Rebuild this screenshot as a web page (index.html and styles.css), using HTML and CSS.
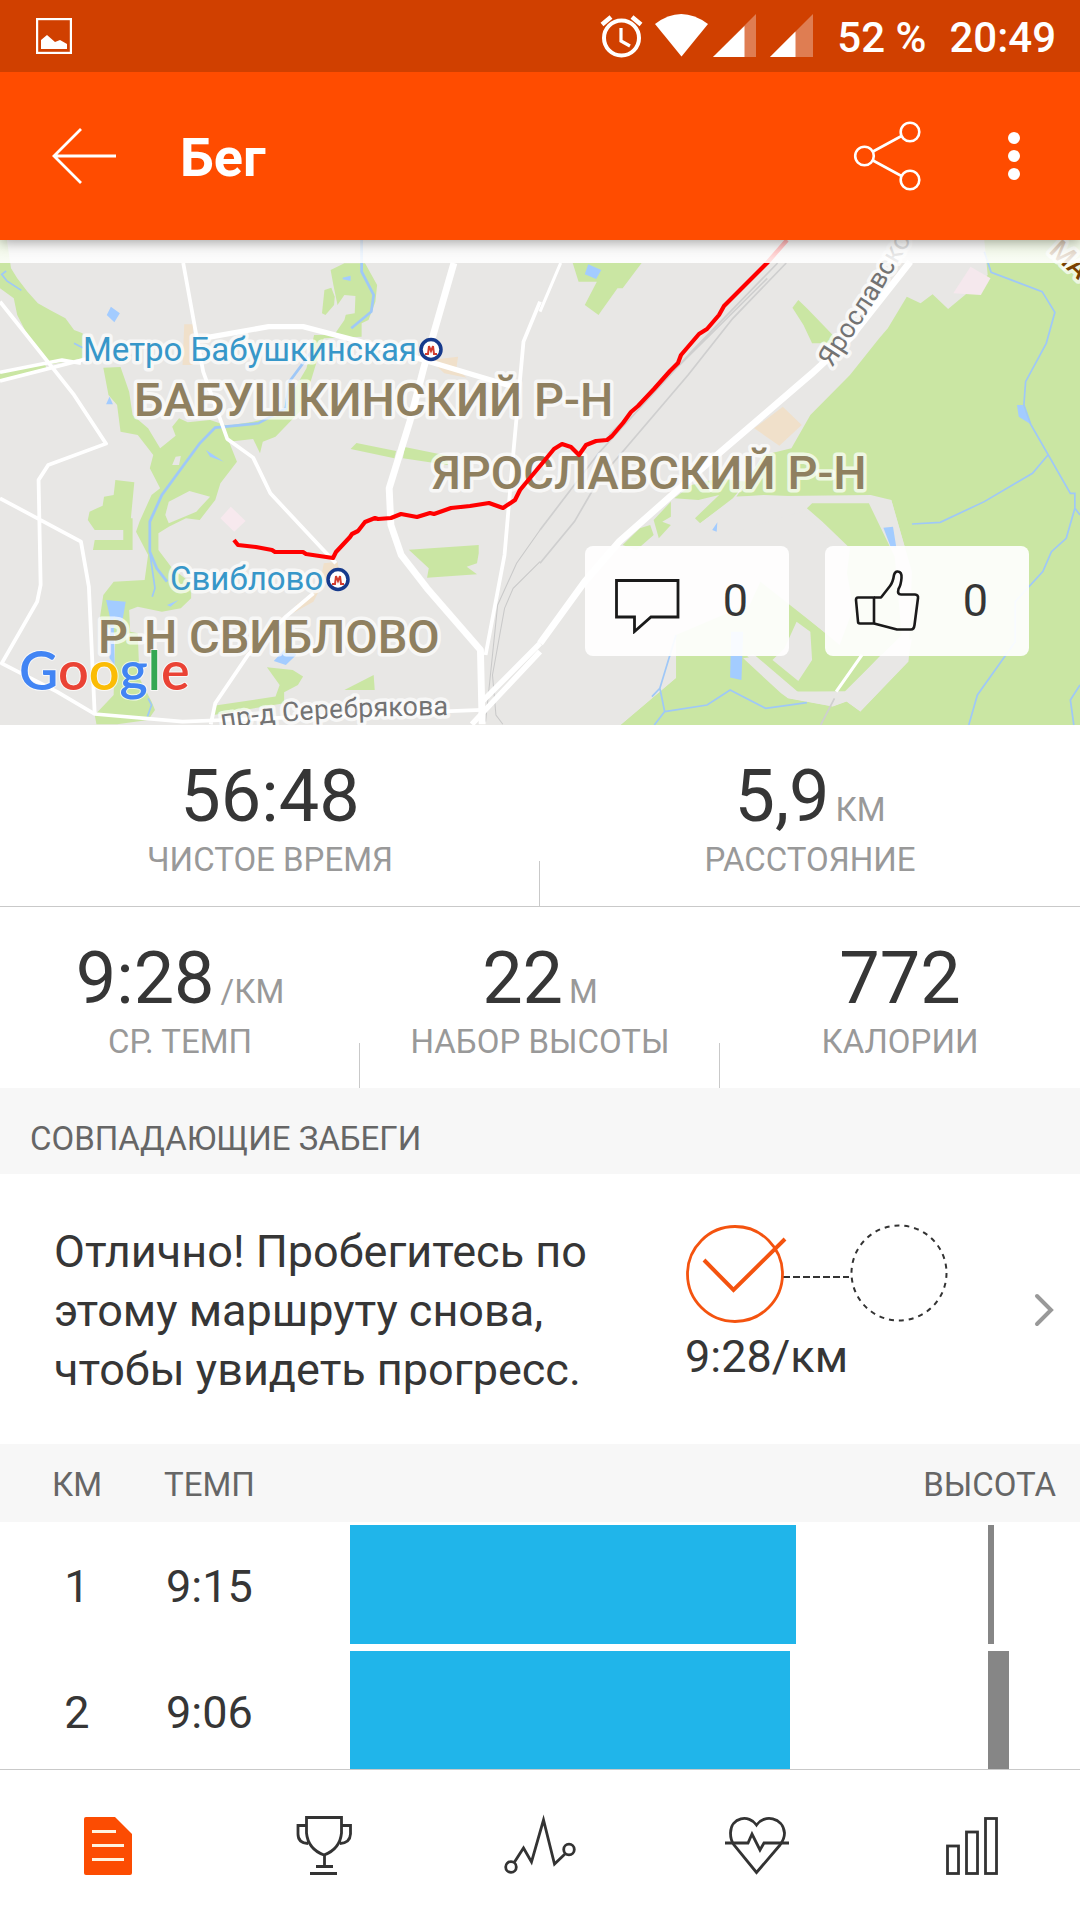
FILE: index.html
```html
<!DOCTYPE html>
<html lang="ru">
<head>
<meta charset="utf-8">
<meta name="viewport" content="width=device-width, initial-scale=1">
<title>Бег</title>
<link rel="stylesheet" href="styles.css">
</head>
<body>
<div class="app">
  <div class="status">
    <svg class="icon" width="36" height="36" viewBox="0 0 36 36" aria-hidden="true">
      <rect x="1" y="1" width="34" height="34" fill="none" stroke="#fff" stroke-width="2.4"/>
      <path d="M5 31V22l6-5 8 7 5-2 7 4v5z" fill="#fff"/>
    </svg>
    <div class="status-right">
      <svg class="icon" width="214" height="44" viewBox="601 14 214 44" fill="none" aria-hidden="true">
        <circle cx="622.500" cy="38" r="17.500" stroke="#fff" stroke-width="4"/>
        <path d="M622 28v13l9 5" stroke="#fff" stroke-width="3.200"/>
        <path d="M603 24.500l9-7.500M642 24.500l-9-7.500" stroke="#fff" stroke-width="4.500"/>
        <path d="M656 24Q682 4 709 24L682.500 56.500z" fill="#fff"/>
        <path d="M757 14v43h-43z" fill="#fff" opacity=".32"/>
        <path d="M745.500 26v31H714z" fill="#fff"/>
        <path d="M814 14v43h-43z" fill="#fff" opacity=".32"/>
        <path d="M796.500 31.500V57H771z" fill="#fff"/>
      </svg>
      <span class="reading">52 %</span>
      <span class="reading">20:49</span>
    </div>
  </div>

  <header class="toolbar">
    <button class="tool back" aria-label="Назад">
      <svg class="icon" width="66" height="60" viewBox="51 126 66 60" fill="none" stroke="#fff" stroke-width="2.800" aria-hidden="true">
        <path d="M116 156H54M81 129L54 156l27 27"/>
      </svg>
    </button>
    <h1 class="title">Бег</h1>
    <button class="tool" aria-label="Поделиться">
      <svg class="icon" width="68" height="72" viewBox="853 120 68 72" fill="none" stroke="#fff" stroke-width="2.600" aria-hidden="true">
        <circle cx="864.500" cy="156" r="9.300"/><circle cx="910" cy="132" r="9.300"/><circle cx="910" cy="180" r="9.300"/>
        <path d="M873 151.500L901.500 136M873 160.500L901.500 176"/>
      </svg>
    </button>
    <button class="tool more" aria-label="Ещё">
      <svg class="icon" width="12" height="48" viewBox="0 0 12 48" fill="#fff" aria-hidden="true">
        <circle cx="6" cy="6" r="6"/><circle cx="6" cy="24" r="6"/><circle cx="6" cy="42" r="6"/>
      </svg>
    </button>
  </header>

  <main class="content">
    <section class="map">
      <svg class="map-canvas" viewBox="0 240 1080 485" preserveAspectRatio="xMidYMid slice" role="img" aria-label="Карта маршрута">
        <rect x="0" y="240" width="1080" height="485" fill="#e8e7e5"/>
        <!-- western half -->
        <g transform="translate(0 235) scale(.3444 .3333)">
          <g fill="#cae6a3">
            <path d="M0 15H20L32 100 50 130 80 170 110 205 145 225 190 250 215 285 240 295V370L150 388 110 340 75 290 50 240 40 190 0 160z"/>
            <path d="M0 415L128 385 135 398 0 434z"/>
            <path d="M300 398L350 396 375 470 385 540 430 580 465 640 510 602 500 575 520 550 545 562 610 555 660 572 735 560 820 540 850 470 890 400 912 300 970 300 1000 255 1010 215 980 210 968 150 960 105 1000 85H1060L1095 150 1090 200 1070 255 1050 265V305L940 310 905 430 870 530 800 605 763 620 755 655 735 612 665 620 688 680 640 745 625 795 580 855 540 850 490 875 460 895V945L500 1000 555 1045V1090L525 1120 470 1130 400 1115 375 1125 378 1190 400 1195 405 1330 440 1400 450 1425 430 1455 340 1468H280L275 1440 330 1380 335 1200 290 1150 300 1080 330 1040 420 1035 430 960 395 890 405 860 440 780 465 760 435 700 445 660 400 600 350 590 340 510 315 480z"/>
            <path d="M942 165L962 158 972 185 970 210 945 240 935 235z"/>
            <path d="M335 735L390 742 380 850H385V945L270 945 275 915 358 915V885H275L255 855 260 830 298 812 302 785 330 780z"/>
            <path d="M1035 624L1150 648 1145 670 1018 642zM1175 636L1300 662V690L1170 670z"/>
            <path d="M1187 944L1390 930V955L1385 985 1355 995 1385 1018 1240 1028 1245 1000z"/>
            <path d="M775 1297L850 1305 880 1325 865 1350 825 1372V1405L620 1440 625 1412 800 1385 812 1350z"/>
            <path d="M1085 1320L1088 1365 1000 1365z"/>
          </g>
          <g fill="#e8e7e5">
            <path d="M980 210L1000 180 1032 183 1030 235 1000 240z"/>
            <path d="M490 800L550 768 610 785 570 830 490 865 480 840z"/>
            <path d="M510 665L525 663 520 690 500 690z"/>
          </g>
          <g fill="#f0e0ca">
            <path d="M535 268H560V390H530zM1250 375L1330 365 1325 400 1355 428 1290 415zM940 985L980 980 985 1010 930 1040zM860 1110L930 1060 910 1100 850 1135z"/>
          </g>
          <path d="M670 815L713 858 680 890 640 850z" fill="#f7e9ee"/>
          <g fill="#a3ccff">
            <path d="M322 215L348 235 332 262 310 240zM318 485L328 508 308 508zM598 645L650 680 610 665zM308 1095L365 1100 355 1160 330 1150 333 1290 318 1270 320 1150zM840 1228L860 1260 830 1290 795 1278zM485 1110L518 1095 495 1115zM995 128L1018 122V138L995 133z"/>
          </g>
          <g fill="none" stroke="#9fc8f7">
            <path d="M1050 15L1050 110 1085 180 1078 230 1020 280M905 350L840 440 830 520 750 565 625 578 580 625 470 780 435 860V950L455 1000 485 1040" stroke-width="8"/>
            <path d="M436 960L450 1060 442 1085M18 108L5 118 20 138 62 166M215 325L240 338M430 1390L440 1410 428 1445" stroke-width="5"/>
          </g>
          <g fill="none" stroke="#c9c9c9" stroke-width="3">
            <path d="M1568 885L1500 985 1445 1110 1410 1460M1568 980L1490 1060 1465 1120 1430 1320 1440 1440 1460 1468"/>
          </g>
          <g fill="none" stroke="#fff" stroke-linejoin="round">
            <path d="M532 84L570 300 590 410 660 612 735 668 785 775 975 985M0 200L150 395 215 480 308 626 140 690 112 735 118 1050 108 1100 5 1285 165 1370 275 1437 530 1460 1400 1425M0 790L235 920 258 1055 275 1437M0 412L180 375 235 385M0 438L250 372M910 1075L830 1145 720 1260 625 1405 612 1468M1568 200L1520 320 1490 660 1465 960 1410 1260" stroke-width="11"/>
            <path d="M600 308L780 275 880 275 1040 318 1240 378 1490 455M1568 1250L1370 1468M1568 1225L1400 1400" stroke-width="16"/>
            <path d="M1318 84L1230 400 1190 560 1130 760 1135 870 1165 960 1240 1060 1395 1245 1400 1468" stroke-width="20"/>
          </g>
        </g>
        <!-- eastern half -->
        <g transform="translate(540 235) scale(.3444 .3333)">
          <g fill="#cae6a3">
            <path d="M1290 15H1568V1470H235L395 1330 470 1260 600 1240 720 1110 880 1240 1050 1220 1060 940 1020 795 960 780 570 785 650 660 730 640 785 540 900 420 985 310 1010 280 1065 185 1105 205 1140 178 1185 222 1240 175 1300 120z"/>
            <path d="M95 84H295L240 160 225 160 180 225 170 240 130 210 165 140 112 140z"/>
            <path d="M750 195L775 220 850 300 855 325 790 325 765 270 733 218z"/>
            <path d="M390 790L440 750 520 730 600 740 560 790 465 865 450 850 520 780 460 795z"/>
            <path d="M240 930L290 880 320 870 330 900 280 945zM330 855L380 800 380 845 355 860 380 870 345 910z"/>
          </g>
          <path d="M570 785L650 780 1020 795 1080 1010 1070 1280 930 1430 890 1400 850 1415 720 1390 590 1280 380 1250 230 930 280 945 465 865z" fill="#e8e7e5"/>
          <path d="M395 1200L600 1110 720 1240 600 1262 640 1300 720 1390 850 1415 890 1400 930 1430 900 1470H235L395 1330z" fill="#cae6a3"/>
          <path d="M775 820L790 805 955 805 1030 965 1050 1200 885 1370 750 1372 600 1240 600 1130 640 1040 830 1195 870 1200 900 940 820 860z" fill="#cae6a3"/>
          <path d="M540 900L760 830 880 950 910 1120 870 1230 730 1110 600 1000 520 1000zM745 1160L785 1190 790 1275 750 1338 675 1275 710 1240zM1080 1210L1068 1280 930 1430 890 1400 850 1415 720 1390 700 1375 590 1270 625 1265 745 1370 890 1370 990 1260z" fill="#e8e7e5"/>
          <path d="M1250 95L1308 130 1280 180 1200 175z" fill="#f5e8ed"/>
          <path d="M705 515L760 570 695 632 622 580z" fill="#f0e0ca"/>
          <path d="M140 88L178 105 163 132 130 118zM515 862L513 890 500 885zM997 878L1025 875 1035 940 1018 935zM555 1190H590L585 1335 552 1328zM1385 510H1402L1425 568 1390 545z" fill="#a3ccff"/>
          <g fill="none" stroke="#9fc8f7" stroke-width="5">
            <path d="M1290 50L1310 112 1458 170 1495 232 1470 325 1410 440 1405 510 1425 568 1540 775H1553V820L1528 910 1485 950 1460 1010 1380 1100V1220L1270 1380 1245 1470M1475 660L1430 715 1290 800 1162 862 1080 867M1553 820L1568 840M1568 1350L1540 1395 1550 1470M395 1200L348 1360 362 1430 332 1470M325 1385L348 1360M362 1430L485 1410 552 1365 655 1420 775 1403"/>
          </g>
          <path d="M690 84L440 350 170 655 0 885M715 84L560 250 430 420 170 735 100 860 0 985M660 130L200 600M855 1390L815 1470" fill="none" stroke="#cfcfcf" stroke-width="5"/>
          <path d="M60 84L0 230M935 1260L860 1370" fill="none" stroke="#fff" stroke-width="9"/>
          <path d="M1075 80L900 310 790 415 520 655 230 920 130 1040 0 1225" fill="none" stroke="#fff" stroke-width="20"/>
        </g>
        <g class="label station">
          <text x="83" y="361">Метро Бабушкинская</text>
          <text x="170" y="590">Свиблово</text>
        </g>
        <g fill="#fff" stroke="#163a8c" stroke-width="3.500">
          <circle cx="431" cy="349.500" r="10"/><circle cx="338" cy="579.500" r="10"/>
        </g>
        <path d="M425 354h3l1-8 2 5 2-5 1 8h3M332 584h3l1-8 2 5 2-5 1 8h3" fill="none" stroke="#d23b2c" stroke-width="2"/>
        <g class="label district">
          <text x="134" y="416">БАБУШКИНСКИЙ Р-Н</text>
          <text x="432" y="489">ЯРОСЛАВСКИЙ Р-Н</text>
          <text x="98" y="653">Р-Н СВИБЛОВО</text>
        </g>
        <path id="street-a" d="M222 729Q300 716 460 715" fill="none"/>
        <path id="street-b" d="M832 368L874 303 920 225" fill="none"/>
        <g class="label street">
          <text><textPath href="#street-a">пр-д Серебрякова</textPath></text>
          <text><textPath href="#street-b">Ярославско</textPath></text>
        </g>
        <text class="label highway" transform="translate(1048 252) rotate(43)">МА</text>
        <path d="M234 540L238 545 256 547 272 550 275 552 303 552 306 554 333 558 336 552 350 537 352 534 358 531 365 522 375 518 378 519 391 518 401 514 417 517 430 513 434 514 451 508 470 506 489 503 503 508 515 500 520 490 540 466 554 449 562 444 571 447 579 455 586 445 596 441 607 440 612 436 623 423 631 412 638 406 654 389 670 371 678 363 681 355 699 334 707 329 719 315 724 306 740 290 767 263 787 240" fill="none" stroke="#f00" stroke-width="4.200" stroke-linejoin="round"/>
        <text class="label google" x="19" y="690"><tspan fill="#4285f4">G</tspan><tspan fill="#ea4335">o</tspan><tspan fill="#fbbc05">o</tspan><tspan fill="#4285f4">g</tspan><tspan fill="#34a853">l</tspan><tspan fill="#ea4335">e</tspan></text>
      </svg>
      <div class="map-veil"></div>
      <div class="map-actions">
        <button class="pill" aria-label="Комментарии: 0">
          <svg class="icon" width="66" height="66" viewBox="614 568 66 66" fill="none" stroke="#1a1a1a" stroke-width="2.800" aria-hidden="true">
            <path d="M616.500 580.500H678V617H651L634.500 631.500V617H616.500z"/>
          </svg>
          <span class="count">0</span>
        </button>
        <button class="pill" aria-label="Нравится: 0">
          <svg class="icon" width="66" height="66" viewBox="1 0 66 66" fill="none" stroke="#1a1a1a" stroke-width="2.600" stroke-linejoin="round" aria-hidden="true">
            <path d="M21 29.500H5Q3 29.500 3 32L5 53.500Q5 55.500 7 55.500H21z"/>
            <path d="M21 29.500H28L37 18Q40 14 41 7 42 3 45 3.500 49 4 48.500 10 48 17 45.500 21 44 26.500 48 26.500H62Q65.500 27 65 30L61.500 57Q61 61.500 58 61.500H44L21 55.500"/>
          </svg>
          <span class="count">0</span>
        </button>
      </div>
    </section>

    <section class="stats">
      <div class="stat-row">
        <div class="stat"><div class="value">56:48</div><div class="caption">ЧИСТОЕ ВРЕМЯ</div></div>
        <div class="stat"><div class="value">5,9<span class="unit">КМ</span></div><div class="caption">РАССТОЯНИЕ</div></div>
      </div>
      <div class="stat-row">
        <div class="stat"><div class="value">9:28<span class="unit">/КМ</span></div><div class="caption">СР. ТЕМП</div></div>
        <div class="stat"><div class="value">22<span class="unit">М</span></div><div class="caption">НАБОР ВЫСОТЫ</div></div>
        <div class="stat"><div class="value">772</div><div class="caption">КАЛОРИИ</div></div>
      </div>
    </section>

    <h2 class="section-title">СОВПАДАЮЩИЕ ЗАБЕГИ</h2>
    <a class="matched" href="#matched">
      <span class="matched-text">Отлично! Пробегитесь по этому маршруту снова, чтобы увидеть прогресс.</span>
      <span class="progress">
        <svg class="icon" width="264" height="100" viewBox="686 1224 264 100" fill="none" aria-hidden="true">
          <path d="M784 1277H850" stroke="#333" stroke-width="2" stroke-dasharray="7 3"/>
          <circle cx="900" cy="1273" r="47.500" stroke="#333" stroke-width="2" stroke-dasharray="5 4.950"/>
          <circle cx="736" cy="1274" r="47.500" stroke="#f4530f" stroke-width="2.800"/>
          <path d="M705 1260L734.500 1290 786 1239" stroke="#f4530f" stroke-width="4"/>
        </svg>
        <span class="pace">9:28/км</span>
      </span>
      <svg class="icon chevron" width="20" height="34" viewBox="0 0 20 34" fill="none" stroke="#999" stroke-width="4" stroke-linecap="round" aria-hidden="true">
        <path d="M3 3L17 17 3 31"/>
      </svg>
    </a>

    <table class="splits">
      <thead>
        <tr><th class="km">КМ</th><th class="tempo">ТЕМП</th><th></th><th class="height">ВЫСОТА</th></tr>
      </thead>
      <tbody>
        <tr><td class="km">1</td><td class="tempo">9:15</td><td><div class="bar" style="width:81%"></div></td><td class="height"><div class="climb" style="width:6px"></div></td></tr>
        <tr><td class="km">2</td><td class="tempo">9:06</td><td><div class="bar" style="width:80%"></div></td><td class="height"><div class="climb" style="width:21px"></div></td></tr>
      </tbody>
    </table>
  </main>

  <nav class="tabs">
    <a class="tab" href="#summary" aria-label="Сводка" aria-current="page">
      <svg class="icon" width="72" height="64" viewBox="72 1814 72 64" aria-hidden="true">
        <path d="M86 1817H115L132 1834V1873Q132 1875 130 1875H86Q84 1875 84 1873V1819Q84 1817 86 1817z" fill="#fc4c02"/>
        <path d="M92 1831.500H116M92 1845.500H124M92 1859.500H124" stroke="#fff3e0" stroke-width="3"/>
      </svg>
    </a>
    <a class="tab" href="#results" aria-label="Результаты">
      <svg class="icon" width="72" height="64" viewBox="288 1814 72 64" fill="none" stroke="#333" stroke-width="2.800" aria-hidden="true">
        <path d="M306.500 1817.500H341.500V1833Q340 1849 324 1855 308 1849 306.500 1833zM306 1825.500H298V1834Q298 1843 308 1843.500M342 1825.500H350.500V1834Q350 1843 340 1843.500M324.500 1855V1866M316 1866.500H333M310 1873.500H337"/>
      </svg>
    </a>
    <a class="tab" href="#analysis" aria-label="Анализ">
      <svg class="icon" width="72" height="64" viewBox="504 1814 72 64" fill="none" stroke="#333" stroke-width="2.800" aria-hidden="true">
        <circle cx="511" cy="1867" r="5.300"/><circle cx="569" cy="1849.500" r="5.300"/>
        <path d="M514.500 1862L523.500 1848 531.500 1862 543.500 1820 554.500 1864 565.500 1853.500"/>
      </svg>
    </a>
    <a class="tab" href="#heart" aria-label="Пульс">
      <svg class="icon" width="72" height="64" viewBox="720 1814 72 64" fill="none" stroke="#333" stroke-width="2.800" aria-hidden="true">
        <path d="M756.500 1825C749 1814 731 1817 730.500 1833 730.500 1838 731 1841 734 1845L756.500 1872.500 780 1845C783 1841 784.500 1838 784.500 1833 783 1817 764 1814 756.500 1825z"/>
        <path d="M725 1843H748L752 1834 760 1850 764 1843H789"/>
      </svg>
    </a>
    <a class="tab" href="#charts" aria-label="Графики">
      <svg class="icon" width="72" height="64" viewBox="936 1814 72 64" fill="none" stroke="#333" stroke-width="2.800" aria-hidden="true">
        <rect x="947.500" y="1846" width="11" height="27.500"/><rect x="966.500" y="1832" width="11" height="41.500"/><rect x="985.500" y="1818.500" width="11" height="55"/>
      </svg>
    </a>
  </nav>
</div>
</body>
</html>
```
FILE: styles.css
```css
* {
  box-sizing: border-box;
}

body {
  margin: 0;
  background: #fff;
  color: #363636;
  font-family: Roboto, "Liberation Sans", sans-serif;
}

button {
  border: 0;
  padding: 0;
  background: none;
  color: inherit;
  font: inherit;
}

a {
  color: inherit;
  text-decoration: none;
}

.icon {
  display: block;
  flex: none;
}

.app {
  display: flex;
  flex-direction: column;
  height: 100vh;
}

.status {
  display: flex;
  flex: none;
  align-items: center;
  justify-content: space-between;
  z-index: 2;
  height: 72px;
  padding: 0 24px 0 36px;
  background: #d04000;
  color: #fff;
  font-size: 42px;
  font-weight: 500;
  line-height: 48px;
}

.status-right {
  display: flex;
  align-items: center;
  gap: 23px;
}

.reading {
  padding-top: 3px;
}

.toolbar {
  display: flex;
  flex: none;
  align-items: center;
  z-index: 1;
  height: 168px;
  padding: 0 60px 0 51px;
  background: #ff4c00;
  box-shadow: 0 2px 12px rgba(0, 0, 0, .35);
  color: #fff;
}

.title {
  flex: 1;
  margin: 0 0 0 63px;
  padding-top: 4px;
  font-size: 54px;
  font-weight: 700;
  line-height: 64px;
}

.more {
  margin-left: 87px;
}

.content {
  flex: 1;
  min-height: 0;
  overflow-y: auto;
  scrollbar-width: none;
}

.map {
  position: relative;
  height: 485px;
  overflow: hidden;
}

.map-canvas {
  display: block;
  width: 100%;
  height: 100%;
}

.map-veil {
  position: absolute;
  inset: 0 0 auto;
  height: 23px;
  background: linear-gradient(rgba(255, 255, 255, .7), rgba(255, 255, 255, .9));
}

.map-actions {
  position: absolute;
  right: 51px;
  bottom: 69px;
  display: flex;
  gap: 36px;
}

.pill {
  display: flex;
  align-items: center;
  justify-content: space-between;
  width: 204px;
  height: 110px;
  padding: 0 41px 0 29px;
  border-radius: 8px;
  background: rgba(255, 255, 255, .92);
}

.count {
  font-size: 45px;
  line-height: 54px;
}

.label {
  paint-order: stroke;
  stroke: rgba(255, 255, 255, .7);
  stroke-width: 7px;
  stroke-linejoin: round;
}

.station {
  fill: #3797c9;
  font-size: 33px;
}

.district {
  fill: #8f8060;
  font-size: 47px;
  font-weight: 500;
}

.street {
  fill: #737373;
  font-size: 27px;
}

.highway {
  fill: #7a4100;
  font-size: 27px;
  font-weight: 500;
}

.google {
  stroke-width: 2px;
  font-family: Lato, sans-serif;
  font-size: 54px;
  font-weight: 600;
}

.stat-row {
  display: flex;
}

.stat-row + .stat-row {
  border-top: 1px solid #c9c9c9;
}

.stat {
  flex: 1;
  height: 181px;
  padding-top: 36px;
  text-align: center;
}

.stat:not(:last-child) {
  background: linear-gradient(#c9c9c9, #c9c9c9) right bottom / 1px 45px no-repeat;
}

.value {
  height: 72px;
  font-size: 72px;
  line-height: 72px;
}

.unit {
  margin-left: 6px;
  color: #999;
  font-size: 33px;
  line-height: 40px;
}

.caption {
  margin-top: 7px;
  color: #999;
  font-size: 33px;
  line-height: 40px;
}

.section-title {
  margin: 0;
  padding: 31px 30px 15px;
  background: #f7f7f7;
  color: #666;
  font-size: 33px;
  font-weight: 400;
  line-height: 40px;
}

.matched {
  display: flex;
  align-items: center;
  height: 270px;
  padding: 2px 26px 0 54px;
}

.matched-text {
  width: 550px;
  font-size: 45px;
  line-height: 59px;
}

.progress {
  display: flex;
  flex: 1;
  flex-direction: column;
  margin-bottom: 12px;
  padding-left: 81px;
}

.pace {
  margin-top: 6px;
  font-size: 45px;
  line-height: 54px;
}

.splits {
  width: 100%;
  border-spacing: 0;
  table-layout: fixed;
}

.splits th {
  height: 78px;
  padding: 2px 0 0;
  background: #f7f7f7;
  color: #666;
  font-size: 33px;
  font-weight: 400;
}

.splits td {
  height: 126px;
  padding: 3px 0 0;
  font-size: 45px;
}

.splits .km {
  width: 154px;
  text-align: center;
}

.splits .tempo {
  width: 196px;
  padding-left: 12px;
  text-align: left;
}

.splits th.tempo {
  padding-left: 10px;
}

.splits .height {
  width: 180px;
}

.splits th.height {
  padding-right: 24px;
  text-align: right;
}

.splits td.height {
  padding-left: 88px;
}

.bar,
.climb {
  height: 119px;
  margin-bottom: 4px;
  background: #20b5ea;
}

.climb {
  background: #868686;
}

.tabs {
  display: flex;
  flex: none;
  height: 151px;
  border-top: 1px solid #c9c9c9;
  background: #fff;
}

.tab {
  display: flex;
  flex: 1;
  align-items: center;
  justify-content: center;
  padding-top: 2px;
}
```
